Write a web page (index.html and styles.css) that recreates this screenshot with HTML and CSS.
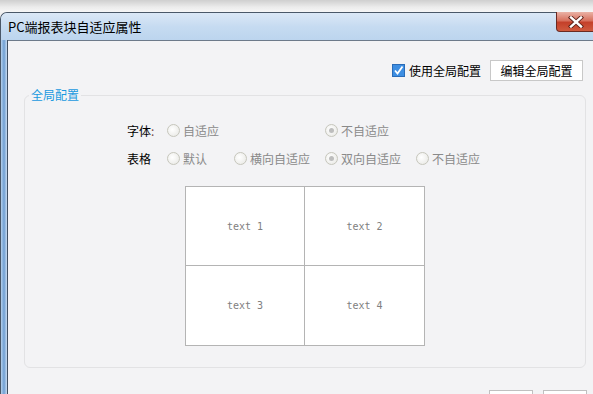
FILE: index.html
```html
<!DOCTYPE html>
<html>
<head>
<meta charset="utf-8">
<link rel="stylesheet" href="styles.css">
</head>
<body>
<div class="desk"></div>
<div class="window">
  <div class="titlebar">
    <span class="title">PC端报表块自适应属性</span>
    <div class="close">
      <svg width="18" height="12" viewBox="0 0 18 12">
        <path d="M4 1.5 L14 10.5 M14 1.5 L4 10.5" stroke="#5a2018" stroke-width="4.2" stroke-linecap="square" fill="none"/>
        <path d="M4 1.5 L14 10.5 M14 1.5 L4 10.5" stroke="#ffffff" stroke-width="2.4" stroke-linecap="square" fill="none"/>
      </svg>
    </div>
  </div>
  <div class="frame">
    <div class="side"></div>
    <div class="client">
      <div class="toolbar">
        <label class="check">
          <span class="box">
            <svg width="13" height="13" viewBox="0 0 13 13"><path d="M3 6.5 L5.5 9.5 L10.5 2.5" stroke="#fff" stroke-width="1.8" fill="none"/></svg>
          </span>
          使用全局配置
        </label>
        <button class="btn">编辑全局配置</button>
      </div>
      <div class="group">
        <div class="legend">全局配置</div>
        <div class="opts">
          <div class="lbl">字体<span class="colon">:</span></div>
          <div class="opt c1"><span class="radio"></span>自适应</div>
          <div class="opt c3"><span class="radio on"></span>不自适应</div>
          <div class="lbl">表格</div>
          <div class="opt c1"><span class="radio"></span>默认</div>
          <div class="opt c2"><span class="radio"></span>横向自适应</div>
          <div class="opt c3"><span class="radio on"></span>双向自适应</div>
          <div class="opt c4"><span class="radio"></span>不自适应</div>
        </div>
        <div class="preview">
          <div class="cell">text 1</div>
          <div class="cell">text 2</div>
          <div class="cell">text 3</div>
          <div class="cell">text 4</div>
        </div>
      </div>
      <div class="footer">
        <button class="fbtn"></button>
        <button class="fbtn"></button>
      </div>
    </div>
  </div>
</div>
</body>
</html>
```

FILE: styles.css
```css
* { box-sizing: border-box; }
html, body { margin: 0; padding: 0; }
body {
  width: 593px;
  height: 394px;
  overflow: hidden;
  background: #f0f0f0;
  font-family: "Noto Sans CJK SC", "Liberation Sans", sans-serif;
  font-size: 12px;
}
.desk {
  height: 12px;
  background: linear-gradient(#cfcfcf, #ececec 60%, #f6f6f6);
}
.window {
  width: 620px;
  border: 1px solid #4a5868;
  border-right: none;
  border-radius: 7px 0 0 0;
  background: #c9dcf0;
  display: flex;
  flex-direction: column;
}
.titlebar {
  flex: none;
  height: 27px;
  display: flex;
  align-items: flex-start;
  background: linear-gradient(#dbe8f6, #c6dbf1 50%, #bcd5ee);
  border-radius: 6px 0 0 0;
  position: relative;
}
.title {
  margin: 6px 0 0 7px;
  font-size: 13px;
  line-height: 16px;
  color: #000;
}
.close {
  position: absolute;
  left: 555px;
  top: -1px;
  width: 45px;
  height: 20px;
  border: 1px solid #6b2a22;
  border-top: none;
  border-radius: 0 0 4px 4px;
  background: linear-gradient(#eab2a6, #d7715e 45%, #c4402a 55%, #cf5a3e);
  display: flex;
  align-items: center;
  padding-left: 10px;
}
.close svg { display: block; }
.frame {
  flex: none;
  display: flex;
}
.side {
  width: 7px;
  background: linear-gradient(90deg, #b5d0ec, #6f9fd2 50%, #c8dcf2);
  border-right: 1px solid #3f4e60;
}
.client {
  flex: 1;
  background: #f3f3f5;
  border-top: 1px solid #6d7a8a;
  display: flex;
  flex-direction: column;
}
.toolbar {
  flex: none;
  display: flex;
  justify-content: flex-end;
  align-items: center;
  width: 575px;
  padding: 19px 0 0 0;
  gap: 9px;
}
.check {
  display: flex;
  align-items: center;
  gap: 4px;
  font-size: 12px;
  color: #000;
  line-height: 20px;
}
.box {
  width: 13px;
  height: 13px;
  background: #3d8ee2;
  border: 1px solid #2a6cb8;
  display: block;
}
.box svg { display: block; margin: -1px; }
.btn {
  width: 93px;
  height: 21px;
  background: #fff;
  border: 1px solid #c8c8c8;
  font-family: inherit;
  font-size: 12px;
  color: #000;
  padding: 0;
  line-height: 19px;
}
.group {
  flex: none;
  position: relative;
  margin: 14px 0 0 16px;
  width: 562px;
  height: 273px;
  border: 1px solid #e2e2e4;
  border-radius: 6px;
  padding: 20px 0 0 102px;
}
.legend {
  position: absolute;
  left: 4px;
  top: -8px;
  padding: 0 2px;
  background: #f3f3f5;
  color: #1a9ae0;
  font-size: 12px;
  line-height: 14px;
}
.opts {
  display: grid;
  grid-template-columns: 40px 67px 91px 91px auto;
  grid-auto-rows: 28px;
  align-items: center;
  color: #8a8a8a;
}
.lbl { color: #000; grid-column: 1; }
.colon { color: #7a4848; }
.opt { display: flex; align-items: center; gap: 3px; white-space: nowrap; }
.c1 { grid-column: 2; }
.c2 { grid-column: 3; }
.c3 { grid-column: 4; }
.c4 { grid-column: 5; }
.radio {
  width: 13px;
  height: 13px;
  border-radius: 50%;
  border: 1px solid #c6c6bc;
  background: radial-gradient(circle at 40% 40%, #ffffff, #e6e6e2);
  position: relative;
  flex: none;
}
.radio.on::after {
  content: "";
  position: absolute;
  left: 3px;
  top: 3px;
  width: 5px;
  height: 5px;
  border-radius: 50%;
  background: #bdbdbd;
}
.preview {
  margin: 14px 0 0 58px;
  width: 240px;
  height: 160px;
  border: 1px solid #b4b4b4;
  background: #fff;
  display: grid;
  grid-template-columns: 119px 119px;
  grid-template-rows: 79px 79px;
}
.cell {
  display: flex;
  align-items: center;
  justify-content: center;
  font-family: "DejaVu Sans Mono", monospace;
  font-size: 10px;
  color: #808080;
}
.cell:nth-child(1), .cell:nth-child(3) { border-right: 1px solid #b4b4b4; }
.cell:nth-child(1), .cell:nth-child(2) { border-bottom: 1px solid #b4b4b4; }
.footer {
  flex: none;
  display: flex;
  gap: 10px;
  margin: 22px 0 0 481px;
}
.fbtn {
  width: 44px;
  height: 24px;
  background: #fff;
  border: 1px solid #c0c0c0;
  padding: 0;
}
```
